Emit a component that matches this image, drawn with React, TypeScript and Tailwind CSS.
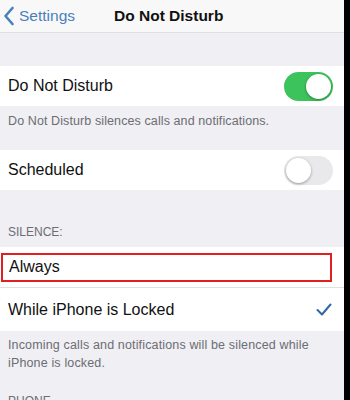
import React from "react";

const Toggle = ({on}: {on: boolean}) => (
  <div className={`w-[49px] h-[29px] rounded-full p-[2px] flex items-center ${on ? "bg-[#3cc35c] justify-end" : "bg-[#e9e9eb] justify-start"}`}>
    <div className="w-[25px] h-[25px] rounded-full bg-white shadow-[0_1px_3px_rgba(0,0,0,0.35)]" />
  </div>
)

const App = () => {
  return (
    <div className="w-[350px] h-[400px] overflow-hidden flex bg-black" style={{fontFamily: '"Liberation Sans", Arial, sans-serif'}}>
      <div className="w-[344px] h-full bg-[#efeff4] flex flex-col">
        <div className="h-[33px] bg-[#f8f8f8] border-b border-[#e0e0e4] flex items-center relative shrink-0">
          <div className="flex items-center pl-[3px] text-[#4a7fbd] text-[15.5px]">
            <svg width="12" height="20" viewBox="0 0 12 20" fill="none" stroke="#4a7fbd" strokeWidth="2.6" strokeLinecap="round" strokeLinejoin="round">
              <path d="M9.5 2 L2.5 10 L9.5 18" />
            </svg>
            <span className="ml-[4px]">Settings</span>
          </div>
          <div className="absolute left-[114px] text-[15.5px] font-bold text-[#111]">Do Not Disturb</div>
        </div>

        <div className="h-[33px] shrink-0" />

        <div className="h-[40px] bg-white flex items-center justify-between pl-[8px] pr-[11px] shrink-0">
          <span className="text-[16px] text-[#111]">Do Not Disturb</span>
          <Toggle on={true} />
        </div>
        <div className="h-[44px] pl-[8px] pt-[6px] text-[12.5px] tracking-[0.1px] text-[#6d6d72] shrink-0">
          Do Not Disturb silences calls and notifications.
        </div>

        <div className="h-[40px] bg-white flex items-center justify-between pl-[8px] pr-[11px] shrink-0">
          <span className="text-[16px] text-[#111]">Scheduled</span>
          <Toggle on={false} />
        </div>

        <div className="h-[57px] flex items-end pl-[8px] pb-[6px] text-[12px] text-[#6d6d72] shrink-0">
          SILENCE:
        </div>

        <div className="bg-white shrink-0">
          <div className="h-[41px] flex items-center pl-[1px] pr-[12px] border-b border-[#e0e0e4]">
            <div className="w-[331px] h-[29px] border-2 border-[#e02020] flex items-center pl-[6px] text-[16px] text-[#111]">
              Always
            </div>
          </div>
          <div className="h-[43px] flex items-center justify-between pl-[8px] pr-[12px]">
            <span className="text-[16px] text-[#111]">While iPhone is Locked</span>
            <svg width="16" height="13" viewBox="0 0 16 13" fill="none" stroke="#2f68a8" strokeWidth="2" strokeLinecap="round" strokeLinejoin="round">
              <path d="M1.5 7 L6 11.5 L14.5 1.5" />
            </svg>
          </div>
        </div>

        <div className="pl-[8px] pr-[20px] pt-[5px] text-[12.5px] tracking-[0.15px] leading-[18px] text-[#6d6d72] shrink-0">
          Incoming calls and notifications will be silenced while iPhone is locked.
        </div>
        <div className="pl-[8px] pt-[20px] text-[12px] text-[#6d6d72] shrink-0">PHONE</div>
      </div>
    </div>
  )
}

export default App;
